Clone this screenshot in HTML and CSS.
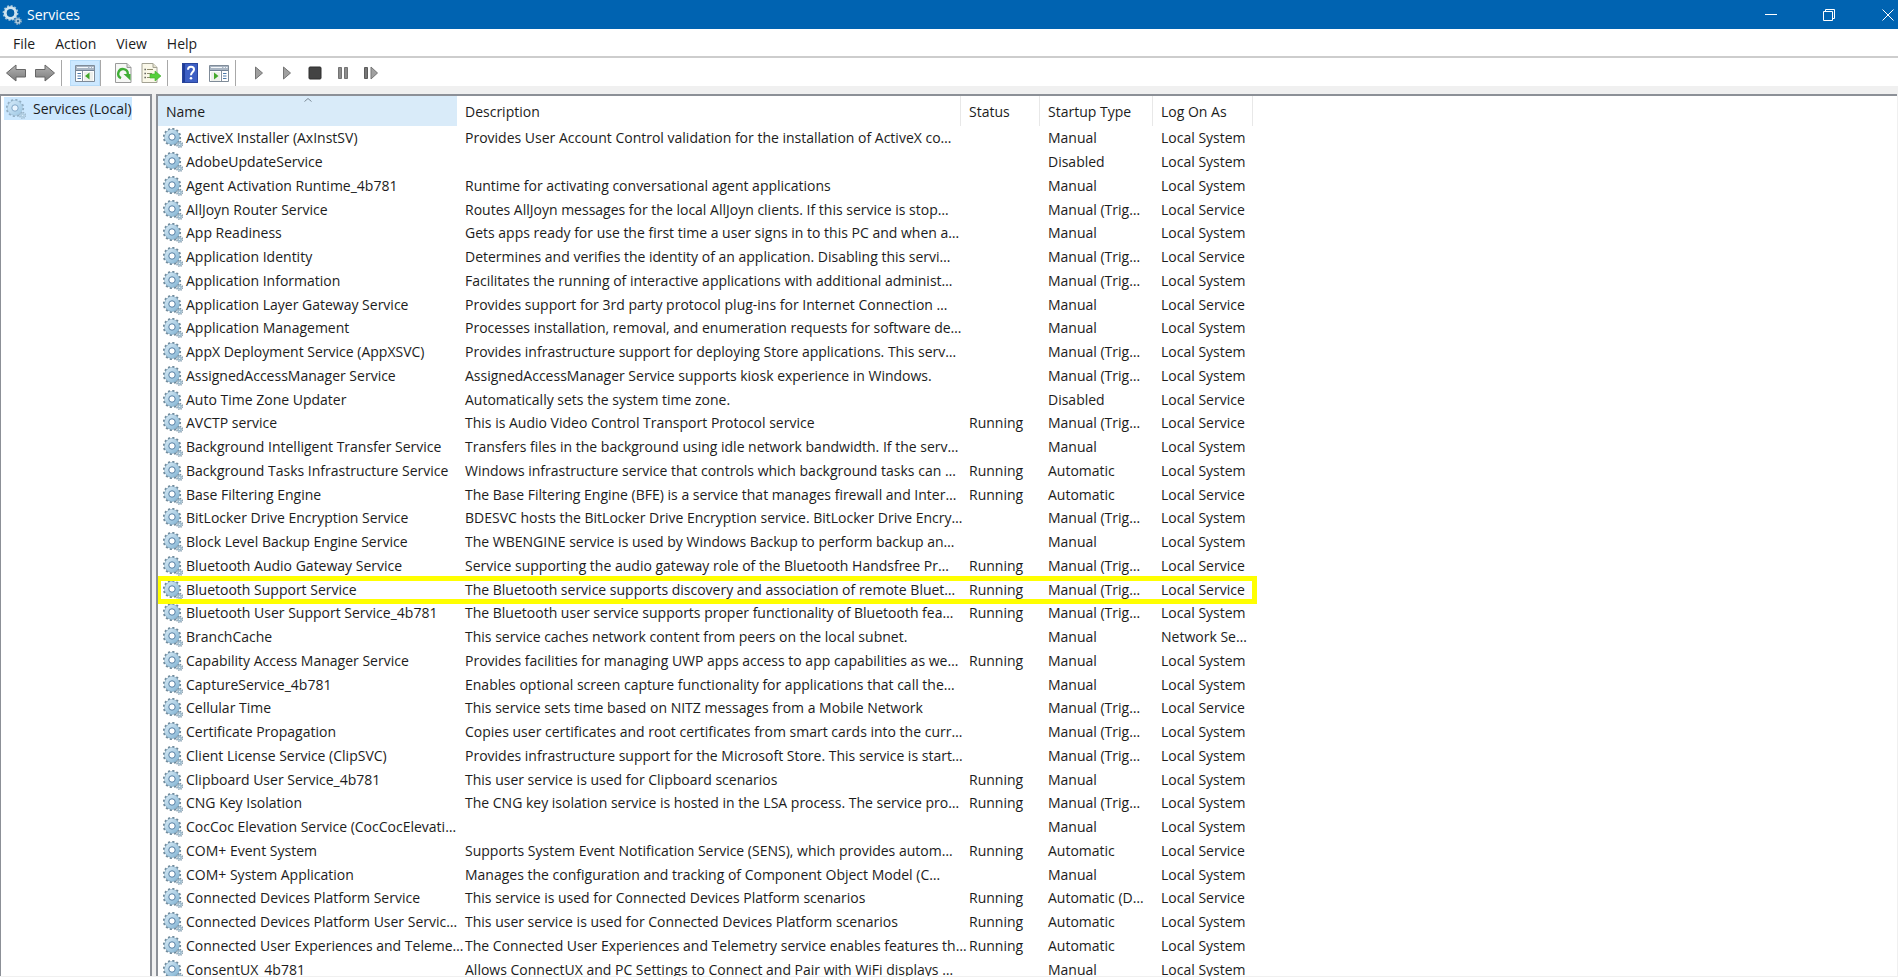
FILE: index.html
```html
<!DOCTYPE html>
<html lang="en">
<head>
<meta charset="utf-8">
<title>Services</title>
<link rel="stylesheet" href="styles.css">
</head>
<body>
<svg class="defs" aria-hidden="true">
  <defs>
    <linearGradient id="steel" x1="0" y1="0" x2="1" y2="1"><stop offset="0" stop-color="#cfe4f1"/><stop offset="1" stop-color="#8dbbd8"/></linearGradient>
    <linearGradient id="grey" x1="0" y1="0" x2="0" y2="1"><stop offset="0" stop-color="#b4b4b4"/><stop offset="1" stop-color="#7c7c7c"/></linearGradient>
    <symbol id="gear" viewBox="0 0 20 20">
      <circle cx="9" cy="9" r="8" fill="none" stroke="#6d8798" stroke-width="2.2" stroke-dasharray="2.1 2.09"/>
      <circle cx="9" cy="9" r="5.4" fill="none" stroke="#86abc4" stroke-width="4.6"/>
      <circle cx="9" cy="9" r="5.2" fill="none" stroke="url(#steel)" stroke-width="4"/>
      <circle cx="9" cy="9" r="3.2" fill="#fff" stroke="#5580a6" stroke-width="1"/>
      <circle cx="16.6" cy="16.4" r="2.8" fill="none" stroke="#7b94a6" stroke-width="1.6" stroke-dasharray="1.2 1"/>
      <circle cx="16.6" cy="16.4" r="1.5" fill="#e6f1f7" stroke="#9dbccf" stroke-width="1.6"/>
    </symbol>
  </defs>
</svg>
<div class="window">
  <header class="titlebar">
    <svg class="app-icon" viewBox="0 0 20 20"><circle cx="8.500" cy="8" r="7" fill="none" stroke="#9fc3da" stroke-width="1.800" stroke-dasharray="2 1.660"/><circle cx="8.500" cy="8" r="5.200" fill="none" stroke="#cfe3ee" stroke-width="3"/><circle cx="8.500" cy="8" r="3.700" fill="#0560a6"/><circle cx="16" cy="16" r="3" fill="none" stroke="#8fb0c8" stroke-width="1.800" stroke-dasharray="1.500 .860"/><circle cx="16" cy="16" r="1.900" fill="#39709a" stroke="#b5cfdf" stroke-width="1.300"/></svg>
    <h1>Services</h1>
    <div class="controls">
      <button aria-label="Minimize"><svg viewBox="0 0 12 12"><path d="M0 5.500h12"/></svg></button>
      <button aria-label="Restore"><svg viewBox="0 0 12 12"><path d="M.5 2.500h9v9h-9zM2.500 2.500v-2h9v9h-2"/></svg></button>
      <button aria-label="Close"><svg viewBox="0 0 12 12"><path d="M.5.5l11 11M11.500.5l-11 11"/></svg></button>
    </div>
  </header>
  <nav class="menubar">
    <button>File</button><button>Action</button><button>View</button><button>Help</button>
  </nav>
  <div class="toolbar">
    <div class="group nav">
      <button aria-label="Back"><svg viewBox="0 0 20 20"><path d="M.5 10L10 2v4.500h9.500v7.500H10V18z" fill="url(#grey)" stroke="#666" stroke-linejoin="round"/></svg></button>
      <button aria-label="Forward"><svg viewBox="0 0 20 20"><path d="M19.500 10L10 2v4.500H.5v7.500H10V18z" fill="url(#grey)" stroke="#666" stroke-linejoin="round"/></svg></button>
    </div>
    <div class="group tree">
      <button class="pressed" aria-label="Show console tree"><svg viewBox="0 0 20 20"><path d="M.5 2.500h19v16H.5z" fill="#fff" stroke="#7f8b98"/><path d="M1 3h18v5H1z" fill="#a9b5c3"/><path d="M2 4.500h11M14.500 4.500h1.500M17 4.500h1.500" stroke="#f4f7fa"/><path d="M1 7.500h18" stroke="#728296"/><path d="M7.500 8v10" stroke="#8793a1"/><path d="M2.500 10.500H6M2.500 13H6M2.500 15.500H6" stroke="#4c79ab"/><path d="M9 9h9v9H9z" fill="#eef0ec"/><path d="M14.500 9.500v7L10 13z" fill="#43a82b"/></svg></button>
    </div>
    <div class="group pages">
      <button aria-label="Refresh"><svg viewBox="0 0 20 20"><path d="M2.500.5H14l4 4v15H2.500z" fill="#f6f7f5" stroke="#9a9a9a"/><path d="M14 .5v4h4" fill="#ddd" stroke="#9a9a9a"/><path d="M8 15.200A4.800 4.800 0 1 1 14.800 11" fill="none" stroke="#3fae35" stroke-width="2.400"/><path d="M10.500 11h7v6.500z" fill="#3fae35"/></svg></button>
      <button aria-label="Export list"><svg viewBox="0 0 20 20"><path d="M1 .5h11l4 4v15H1z" fill="#faf8e9" stroke="#a3a294"/><path d="M12 .5v4h4" fill="#e5e2cd" stroke="#a3a294"/><path d="M3.500 6.500h1.300M3.500 10.500h1.300M3.500 14.500h1.300" stroke="#444" stroke-width="1.300"/><path d="M6 6.500h6M6 10.500h5M6 14.500h5" stroke="#8d8b6b" stroke-width="1.200"/><path d="M9 11h5V8l6 5-6 5v-3H9z" fill="#56cf3b" stroke="#3cad2a" stroke-width=".6"/></svg></button>
    </div>
    <div class="group help">
      <button aria-label="Help"><svg viewBox="0 0 20 20"><path d="M2 0h16v20H2z" fill="#3d5fc4"/><path d="M2 0h3v20H2z" fill="#1f3c98"/><path d="M2.500.5h15v19h-15z" fill="none" stroke="#2a459c"/><path d="M8 6.800Q8 3.800 11 3.800t3 2.700c0 2.500-3 2.700-3 5.700" fill="none" stroke="#fff" stroke-width="2"/><circle cx="11" cy="15.300" r="1.300" fill="#fff"/></svg></button>
      <button aria-label="Show action pane"><svg viewBox="0 0 20 20"><path d="M.5 2.500h19v16H.5z" fill="#fff" stroke="#7f8b98"/><path d="M1 3h18v5H1z" fill="#a9b5c3"/><path d="M2 4.500h11M14.500 4.500h1.500M17 4.500h1.500" stroke="#f4f7fa"/><path d="M1 7.500h18" stroke="#728296"/><path d="M12.500 8v10" stroke="#8793a1"/><path d="M14 10.500h3.500M14 13h3.500M14 15.500h3.500" stroke="#4c79ab"/><path d="M2 9h9v9H2z" fill="#eef0ec"/><path d="M5 9.500v7l4.500-3.500z" fill="#43a82b"/></svg></button>
    </div>
    <div class="group play">
      <button aria-label="Start service"><svg viewBox="0 0 20 20"><path d="M6.500 4l7 6-7 6z" fill="#a0a0a0" stroke="#757575"/></svg></button>
      <button aria-label="Resume service"><svg viewBox="0 0 20 20"><path d="M6.500 4l7 6-7 6z" fill="#a0a0a0" stroke="#757575"/></svg></button>
      <button aria-label="Stop service"><svg viewBox="0 0 20 20"><rect x="4" y="4" width="12" height="12" rx="1" fill="#434343" stroke="#2f2f2f"/></svg></button>
      <button aria-label="Pause service"><svg viewBox="0 0 20 20"><path d="M5.500 4.500h3v11h-3zM11.500 4.500h3v11h-3z" fill="#8d8d8d" stroke="#737373"/></svg></button>
      <button aria-label="Restart service"><svg viewBox="0 0 20 20"><path d="M3.500 4.500h3v11h-3z" fill="#777" stroke="#5c5c5c"/><path d="M10 4l6.500 6-6.500 6z" fill="#a0a0a0" stroke="#757575"/></svg></button>
    </div>
  </div>
  <main class="panes">
    <aside class="tree-pane"><a class="node" href="#services"><svg><use href="#gear"/></svg>Services (Local)</a></aside>
    <section class="list-pane" id="services">
      <table>
        <colgroup><col class="c-name"><col class="c-desc"><col class="c-status"><col class="c-start"><col class="c-logon"></colgroup>
        <thead><tr><th class="sorted"><svg class="sort" viewBox="0 0 8 4"><path d="M.5 3.500L4 .5l3.500 3"/></svg>Name</th><th>Description</th><th>Status</th><th>Startup Type</th><th>Log On As</th></tr></thead>
        <tbody>
          <tr><td><svg><use href="#gear"/></svg>ActiveX Installer (AxInstSV)</td><td>Provides User Account Control validation for the installation of ActiveX co…</td><td></td><td>Manual</td><td>Local System</td></tr>
          <tr><td><svg><use href="#gear"/></svg>AdobeUpdateService</td><td></td><td></td><td>Disabled</td><td>Local System</td></tr>
          <tr><td><svg><use href="#gear"/></svg>Agent Activation Runtime_4b781</td><td>Runtime for activating conversational agent applications</td><td></td><td>Manual</td><td>Local System</td></tr>
          <tr><td><svg><use href="#gear"/></svg>AllJoyn Router Service</td><td>Routes AllJoyn messages for the local AllJoyn clients. If this service is stop…</td><td></td><td>Manual (Trig…</td><td>Local Service</td></tr>
          <tr><td><svg><use href="#gear"/></svg>App Readiness</td><td>Gets apps ready for use the first time a user signs in to this PC and when a…</td><td></td><td>Manual</td><td>Local System</td></tr>
          <tr><td><svg><use href="#gear"/></svg>Application Identity</td><td>Determines and verifies the identity of an application. Disabling this servi…</td><td></td><td>Manual (Trig…</td><td>Local Service</td></tr>
          <tr><td><svg><use href="#gear"/></svg>Application Information</td><td>Facilitates the running of interactive applications with additional administ…</td><td></td><td>Manual (Trig…</td><td>Local System</td></tr>
          <tr><td><svg><use href="#gear"/></svg>Application Layer Gateway Service</td><td>Provides support for 3rd party protocol plug-ins for Internet Connection …</td><td></td><td>Manual</td><td>Local Service</td></tr>
          <tr><td><svg><use href="#gear"/></svg>Application Management</td><td>Processes installation, removal, and enumeration requests for software de…</td><td></td><td>Manual</td><td>Local System</td></tr>
          <tr><td><svg><use href="#gear"/></svg>AppX Deployment Service (AppXSVC)</td><td>Provides infrastructure support for deploying Store applications. This serv…</td><td></td><td>Manual (Trig…</td><td>Local System</td></tr>
          <tr><td><svg><use href="#gear"/></svg>AssignedAccessManager Service</td><td>AssignedAccessManager Service supports kiosk experience in Windows.</td><td></td><td>Manual (Trig…</td><td>Local System</td></tr>
          <tr><td><svg><use href="#gear"/></svg>Auto Time Zone Updater</td><td>Automatically sets the system time zone.</td><td></td><td>Disabled</td><td>Local Service</td></tr>
          <tr><td><svg><use href="#gear"/></svg>AVCTP service</td><td>This is Audio Video Control Transport Protocol service</td><td>Running</td><td>Manual (Trig…</td><td>Local Service</td></tr>
          <tr><td><svg><use href="#gear"/></svg>Background Intelligent Transfer Service</td><td>Transfers files in the background using idle network bandwidth. If the serv…</td><td></td><td>Manual</td><td>Local System</td></tr>
          <tr><td><svg><use href="#gear"/></svg>Background Tasks Infrastructure Service</td><td>Windows infrastructure service that controls which background tasks can …</td><td>Running</td><td>Automatic</td><td>Local System</td></tr>
          <tr><td><svg><use href="#gear"/></svg>Base Filtering Engine</td><td>The Base Filtering Engine (BFE) is a service that manages firewall and Inter…</td><td>Running</td><td>Automatic</td><td>Local Service</td></tr>
          <tr><td><svg><use href="#gear"/></svg>BitLocker Drive Encryption Service</td><td>BDESVC hosts the BitLocker Drive Encryption service. BitLocker Drive Encry…</td><td></td><td>Manual (Trig…</td><td>Local System</td></tr>
          <tr><td><svg><use href="#gear"/></svg>Block Level Backup Engine Service</td><td>The WBENGINE service is used by Windows Backup to perform backup an…</td><td></td><td>Manual</td><td>Local System</td></tr>
          <tr><td><svg><use href="#gear"/></svg>Bluetooth Audio Gateway Service</td><td>Service supporting the audio gateway role of the Bluetooth Handsfree Pr…</td><td>Running</td><td>Manual (Trig…</td><td>Local Service</td></tr>
          <tr class="marked"><td><svg><use href="#gear"/></svg>Bluetooth Support Service</td><td>The Bluetooth service supports discovery and association of remote Bluet…</td><td>Running</td><td>Manual (Trig…</td><td>Local Service</td></tr>
          <tr><td><svg><use href="#gear"/></svg>Bluetooth User Support Service_4b781</td><td>The Bluetooth user service supports proper functionality of Bluetooth fea…</td><td>Running</td><td>Manual (Trig…</td><td>Local System</td></tr>
          <tr><td><svg><use href="#gear"/></svg>BranchCache</td><td>This service caches network content from peers on the local subnet.</td><td></td><td>Manual</td><td>Network Se…</td></tr>
          <tr><td><svg><use href="#gear"/></svg>Capability Access Manager Service</td><td>Provides facilities for managing UWP apps access to app capabilities as we…</td><td>Running</td><td>Manual</td><td>Local System</td></tr>
          <tr><td><svg><use href="#gear"/></svg>CaptureService_4b781</td><td>Enables optional screen capture functionality for applications that call the…</td><td></td><td>Manual</td><td>Local System</td></tr>
          <tr><td><svg><use href="#gear"/></svg>Cellular Time</td><td>This service sets time based on NITZ messages from a Mobile Network</td><td></td><td>Manual (Trig…</td><td>Local Service</td></tr>
          <tr><td><svg><use href="#gear"/></svg>Certificate Propagation</td><td>Copies user certificates and root certificates from smart cards into the curr…</td><td></td><td>Manual (Trig…</td><td>Local System</td></tr>
          <tr><td><svg><use href="#gear"/></svg>Client License Service (ClipSVC)</td><td>Provides infrastructure support for the Microsoft Store. This service is start…</td><td></td><td>Manual (Trig…</td><td>Local System</td></tr>
          <tr><td><svg><use href="#gear"/></svg>Clipboard User Service_4b781</td><td>This user service is used for Clipboard scenarios</td><td>Running</td><td>Manual</td><td>Local System</td></tr>
          <tr><td><svg><use href="#gear"/></svg>CNG Key Isolation</td><td>The CNG key isolation service is hosted in the LSA process. The service pro…</td><td>Running</td><td>Manual (Trig…</td><td>Local System</td></tr>
          <tr><td><svg><use href="#gear"/></svg>CocCoc Elevation Service (CocCocElevati…</td><td></td><td></td><td>Manual</td><td>Local System</td></tr>
          <tr><td><svg><use href="#gear"/></svg>COM+ Event System</td><td>Supports System Event Notification Service (SENS), which provides autom…</td><td>Running</td><td>Automatic</td><td>Local Service</td></tr>
          <tr><td><svg><use href="#gear"/></svg>COM+ System Application</td><td>Manages the configuration and tracking of Component Object Model (C…</td><td></td><td>Manual</td><td>Local System</td></tr>
          <tr><td><svg><use href="#gear"/></svg>Connected Devices Platform Service</td><td>This service is used for Connected Devices Platform scenarios</td><td>Running</td><td>Automatic (D…</td><td>Local Service</td></tr>
          <tr><td><svg><use href="#gear"/></svg>Connected Devices Platform User Servic…</td><td>This user service is used for Connected Devices Platform scenarios</td><td>Running</td><td>Automatic</td><td>Local System</td></tr>
          <tr><td><svg><use href="#gear"/></svg>Connected User Experiences and Teleme…</td><td>The Connected User Experiences and Telemetry service enables features th…</td><td>Running</td><td>Automatic</td><td>Local System</td></tr>
          <tr><td><svg><use href="#gear"/></svg>ConsentUX_4b781</td><td>Allows ConnectUX and PC Settings to Connect and Pair with WiFi displays …</td><td></td><td>Manual</td><td>Local System</td></tr>
        </tbody>
      </table>
    </section>
  </main>
</div>
</body>
</html>
```
FILE: styles.css
```css
* { box-sizing: border-box; }
body { margin: 0; background: #f0f0f0; color: #1c1c1c; font: 14px/20px "Open Sans", "Noto Sans", sans-serif; }
button { margin: 0; padding: 0; border: 0; background: none; color: inherit; font: inherit; }
svg { display: block; }
.defs { position: absolute; width: 0; height: 0; }
.window { display: flex; flex-direction: column; height: 100vh; overflow: hidden; }

.titlebar { display: flex; flex: none; align-items: center; height: 29px; padding-left: 2px; background: #0063b1; color: #fff; }
.app-icon { width: 20px; height: 20px; }
.titlebar h1 { flex: 1; margin: 0 0 0 5px; font-size: 14px; font-weight: 400; }
.controls { display: flex; }
.controls button { display: grid; place-items: center; width: 58px; height: 29px; }
.controls button:last-child { width: 20px; margin-left: 20px; }
.controls svg { width: 12px; height: 12px; fill: none; stroke: #fff; }

.menubar { display: flex; flex: none; gap: 20px; height: 29px; padding: 2px 0 0 13px; border-bottom: 2px solid #cdcdcd; background: #fff; }

.toolbar { display: flex; flex: none; align-items: flex-end; height: 28px; background: #fff; }
.toolbar svg { width: 20px; height: 20px; }
.group { display: flex; align-items: center; height: 26px; border-right: 1px solid #a8a8a8; }
.nav { gap: 9px; padding: 0 6px; }
.tree { padding-left: 8px; }
.pressed { padding: 2px 4px; background: #cce8ff; border: 1px solid #b8dcf8; }
.pages { gap: 8px; padding: 0 6px 0 12px; }
.help { gap: 9px; padding: 0 6px 0 12px; }
.play { gap: 8px; padding-left: 13px; border: 0; }

.panes { display: flex; flex: 1; gap: 4px; min-height: 0; margin-top: 8px; padding: 0 1px 1px 0; }
.tree-pane, .list-pane { overflow: hidden; border: 2px solid #8c9097; border-bottom: 0; background: #fff; }
.tree-pane { flex: none; width: 152px; border-left-width: 1px; padding: 1px 0 0 3px; }
.node { display: flex; align-items: center; gap: 7px; width: 128px; height: 23px; padding-left: 2px; background: #cce8ff; color: inherit; text-decoration: none; white-space: nowrap; }
.node svg { flex: none; width: 20px; height: 20px; opacity: .6; }
.list-pane { flex: 1; border-right: 0; }

table { width: 1095px; border-collapse: separate; border-spacing: 0; table-layout: fixed; }
.c-name { width: 299px; }
.c-desc { width: 504px; }
.c-status { width: 79px; }
.c-start { width: 113px; }
.c-logon { width: 100px; }
th { height: 30px; padding: 2px 0 0 8px; border-right: 1px solid #e8e8e8; font-weight: 400; text-align: left; }
th.sorted { position: relative; background: #d9ebf9; border-right-color: #d9ebf9; }
.sort { position: absolute; top: 2px; left: 49%; width: 8px; height: 4px; fill: none; stroke: #7c8b98; }
td { height: 24px; padding: 0 0 0 8px; line-height: 20px; white-space: nowrap; }
tr:nth-child(4n) td { height: 23px; }
td:first-child { padding-left: 5px; }
td svg { float: left; width: 20px; height: 20px; margin-right: 3px; }
.marked { position: relative; }
.marked::after { content: ""; position: absolute; inset: -2px -4px -3px -2px; border: 5px solid #ff0; }
```
